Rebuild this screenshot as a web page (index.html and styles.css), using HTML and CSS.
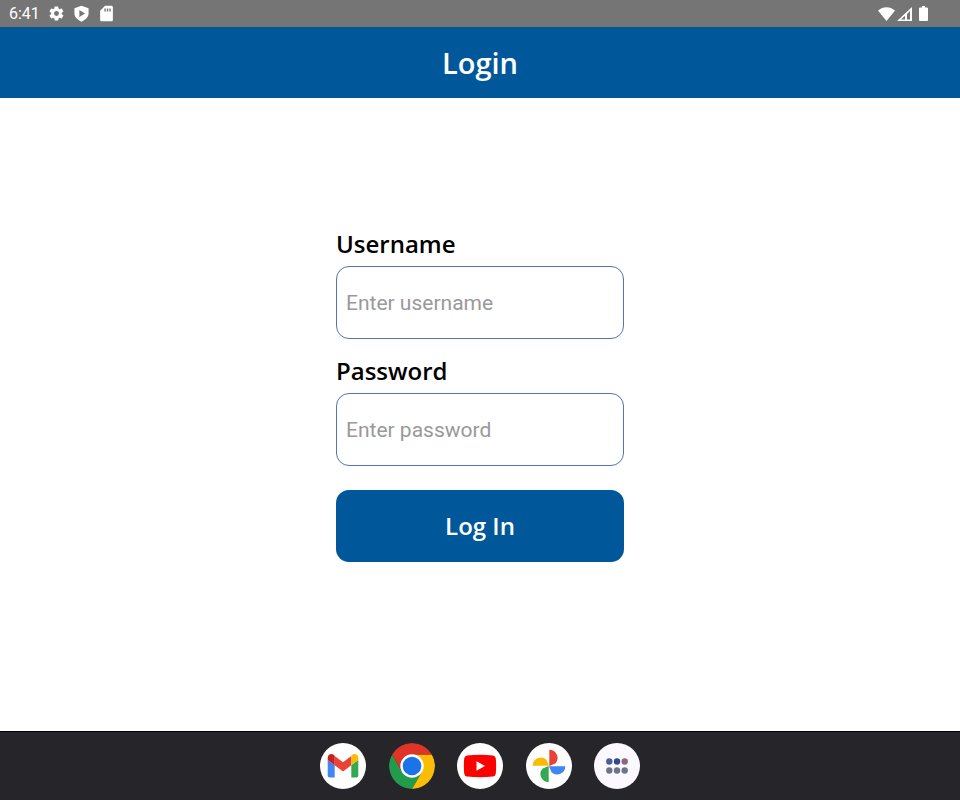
FILE: index.html
```
<!DOCTYPE html>
<html lang="en">
<head>
    <meta charset="UTF-8">
    <meta name="viewport" content="width=device-width, initial-scale=1.0">
    <title>Login</title>
    <link rel="stylesheet" href="styles.css">
</head>
<body>
    <div class="status-bar">
        <div class="status-left">
            <span class="clock">6:41</span>
            <!-- Settings -->
            <svg class="status-icon" viewBox="0 0 24 24"><path fill-rule="evenodd" d="M19.400 13a7.500 7.500 0 0 0 0-2l2.100-1.600c.2-.2.3-.5.1-.7l-2-3.400c-.1-.3-.4-.3-.6-.2l-2.500 1a7 7 0 0 0-1.700-1L14.400 2.400c0-.2-.2-.4-.5-.4h-4c-.2 0-.4.2-.5.4L9 5.100a7 7 0 0 0-1.700 1l-2.500-1c-.2-.1-.5 0-.6.2l-2 3.400c-.1.2-.1.5.1.7L4.500 11a7.500 7.500 0 0 0 0 2l-2.200 1.600c-.2.2-.2.5-.1.7l2 3.400c.1.3.4.3.6.2l2.500-1a7 7 0 0 0 1.700 1l.4 2.700c.1.2.3.4.5.4h4c.3 0 .5-.2.5-.4l.4-2.700a7 7 0 0 0 1.700-1l2.500 1c.2.1.5.1.6-.2l2-3.400c.2-.2.1-.5-.1-.7zM12 15.500a3.500 3.500 0 1 1 0-7 3.500 3.500 0 0 1 0 7z"/></svg>
            <!-- Play Protect -->
            <svg class="status-icon" viewBox="0 0 24 24"><path fill-rule="evenodd" d="M12 1 2 4.500V12c0 5 4.500 9 10 11.500C17.500 21 22 17 22 12V4.500zM9 7v10l8-5z"/></svg>
            <!-- SD card -->
            <svg class="status-icon" viewBox="0 0 24 24"><path fill-rule="evenodd" d="M19 1h-9L3 8v13c0 1.100.9 2 2 2h14c1.100 0 2-.9 2-2V3c0-1.100-.9-2-2-2zM9 5h2v4H9zM12.500 5h2v4h-2zM16 5h2v4h-2z"/></svg>
        </div>
        <div class="status-right">
            <svg class="wifi" viewBox="0 0 17 14"><path d="M0 3.500C5 -1 12 -1 17 3.500L8.500 14z"/></svg>
            <svg class="signal" viewBox="0 0 15 14"><path fill-rule="evenodd" d="M15 0v14H0zM13 4 10 7v5.500h3zM8 8.700 4 12.500h4z"/></svg>
            <svg class="battery" viewBox="0 0 9 15"><path d="M3 0h3v1.500h2q1 0 1 1V14q0 1-1 1H1q-1 0-1-1V2.500q0-1 1-1h2z"/></svg>
        </div>
    </div>

    <header class="header">
        <h1>Login</h1>
    </header>

    <main class="content">
        <form class="login-form">
            <label for="username">Username</label>
            <input type="text" id="username" placeholder="Enter username">
            <label for="password">Password</label>
            <input type="password" id="password" placeholder="Enter password">
            <button type="submit" class="login-btn">Log In</button>
        </form>
    </main>

    <nav class="dock">
        <div class="dock-apps">
            <button class="app" aria-label="Gmail">
                <svg viewBox="0 0 46 46">
                    <path fill="#4285f4" d="M7.700 17l7 5v12.500h-5q-2 0-2-2z"/>
                    <path fill="#34a853" d="M31.300 22l7-5v15.500q0 2-2 2h-5z"/>
                    <path fill="#ea4335" d="M14.700 13l8.300 6.300 8.300-6.300v9.200L23 28.500l-8.300-6.300z"/>
                    <path fill="#c5221f" d="M7.700 17v-2c0-4 4-5 6.500-2.800l.5.500v9.500l-7-5.200z"/>
                    <path fill="#fbbc04" d="M38.300 17v-2c0-4-4-5-6.500-2.800l-.5.500v9.500l7-5.200z"/>
                </svg>
            </button>
            <button class="app app-chrome" aria-label="Chrome">
                <svg viewBox="0 0 46 46">
                    <path fill="#229c4c" d="M3.100 11.500A23 23 0 0 0 23 46l10-17.200H13z"/>
                    <path fill="#fbbc05" d="M42.900 11.500A23 23 0 0 1 23 46l10-17.200L23 11.500z"/>
                    <path fill="#df3428" d="M3.100 11.500a23 23 0 0 1 39.800 0H23L13 28.800z"/>
                    <circle cx="23" cy="23" r="11.700" fill="#fff"/>
                    <circle cx="23" cy="23" r="9.300" fill="#1a73e8"/>
                </svg>
            </button>
            <button class="app" aria-label="YouTube">
                <svg viewBox="0 0 46 46">
                    <path fill="#f00" d="M10 12.400q13-1.200 26 0 2.500.3 2.800 3 .7 7.600 0 15.200-.3 2.700-2.800 3-13 1.200-26 0-2.500-.3-2.800-3-.7-7.600 0-15.200.3-2.700 2.800-3z"/>
                    <path fill="#fff" d="M19.500 18.200v9.600l8.500-4.800z"/>
                </svg>
            </button>
            <button class="app" aria-label="Photos">
                <svg viewBox="0 0 46 46">
                    <path fill="#ea4335" d="M23.300 6.700a8.200 8.200 0 0 1 6 13.800l-6 2.500z"/>
                    <path fill="#4285f4" d="M23 23.300h16.300a8.200 8.200 0 0 1-13.800 6z"/>
                    <path fill="#34a853" d="M22.700 23v16.300a8.200 8.200 0 0 1-6-13.800z"/>
                    <path fill="#fbbc04" d="M23 22.700H6.700a8.200 8.200 0 0 1 13.800-6z"/>
                </svg>
            </button>
            <button class="app app-drawer" aria-label="All apps">
                <svg viewBox="0 0 46 46">
                    <g fill="#6d7488">
                        <circle cx="15.300" cy="27.500" r="3.200"/>
                        <circle cx="23" cy="27.500" r="3.200"/>
                        <circle cx="30.700" cy="27.500" r="3.200"/>
                    </g>
                    <circle cx="15.300" cy="18.500" r="3.200" fill="#4b5c97"/>
                    <circle cx="23" cy="18.500" r="3.200" fill="#35478c"/>
                    <circle cx="30.700" cy="18.500" r="3.200" fill="#8a6584"/>
                </svg>
            </button>
        </div>
    </nav>
</body>
</html>
```

FILE: styles.css
```
* {
    box-sizing: border-box;
}

body {
    margin: 0;
    min-height: 100vh;
    display: flex;
    flex-direction: column;
    background-color: #fff;
    font-family: "Open Sans", sans-serif;
}

/* System status bar */
.status-bar {
    display: flex;
    justify-content: space-between;
    align-items: center;
    height: 27px;
    padding: 0 32px 0 9px;
    background-color: #757575;
    color: #fff;
}

.status-left, .status-right {
    display: flex;
    align-items: center;
}

.status-left {
    gap: 8px;
}

.status-right {
    gap: 2px;
}

.clock {
    font-family: Roboto, sans-serif;
    font-size: 16px;
    line-height: 28px;
}

.status-bar svg {
    fill: #fff;
}

.status-icon {
    width: 17px;
    height: 17px;
}

.wifi {
    width: 17px;
    height: 14px;
}

.signal {
    width: 15px;
    height: 14px;
}

.battery {
    width: 9px;
    height: 15px;
    margin-left: 5px;
}

/* Page header */
.header {
    display: flex;
    justify-content: center;
    align-items: center;
    height: 71px;
    background-color: #00589b;
    color: #fff;
}

.header h1 {
    margin: 0;
    font-size: 29px;
    font-weight: 600;
}

.content {
    flex: 1;
    display: flex;
    justify-content: center;
    align-items: center;
    padding: 24px 24px 64px;
}

.login-form {
    display: flex;
    flex-direction: column;
    width: 100%;
    max-width: 288px;
}

.login-form label {
    margin-bottom: 6px;
    font-size: 24px;
    font-weight: 600;
    line-height: 32px;
    color: #000;
}

.login-form input {
    width: 100%;
    height: 73px;
    margin-bottom: 16px;
    padding: 2px 9px 0;
    border: 1px solid #4f76b0;
    border-radius: 13px;
    background-color: #fff;
    font-family: Roboto, sans-serif;
    font-size: 21px;
}

.login-form input::placeholder {
    color: #999;
}

.login-btn {
    height: 72px;
    margin-top: 8px;
    border: none;
    border-radius: 13px;
    background-color: #00589b;
    color: #fff;
    font-family: inherit;
    font-size: 24px;
    font-weight: 600;
    cursor: pointer;
}

/* App dock */
.dock {
    display: flex;
    justify-content: center;
    align-items: center;
    height: 69px;
    border-top: 1px solid #000;
    background-color: #26262a;
}

.dock-apps {
    display: flex;
    justify-content: space-between;
    width: 320px;
}

.app {
    width: 46px;
    height: 46px;
    padding: 0;
    border: none;
    border-radius: 50%;
    overflow: hidden;
    background-color: #fff;
    cursor: pointer;
}

.app-chrome {
    background-color: transparent;
}

.app-drawer {
    background-color: #fcf8ff;
}

.app svg {
    display: block;
    width: 46px;
    height: 46px;
}
```
